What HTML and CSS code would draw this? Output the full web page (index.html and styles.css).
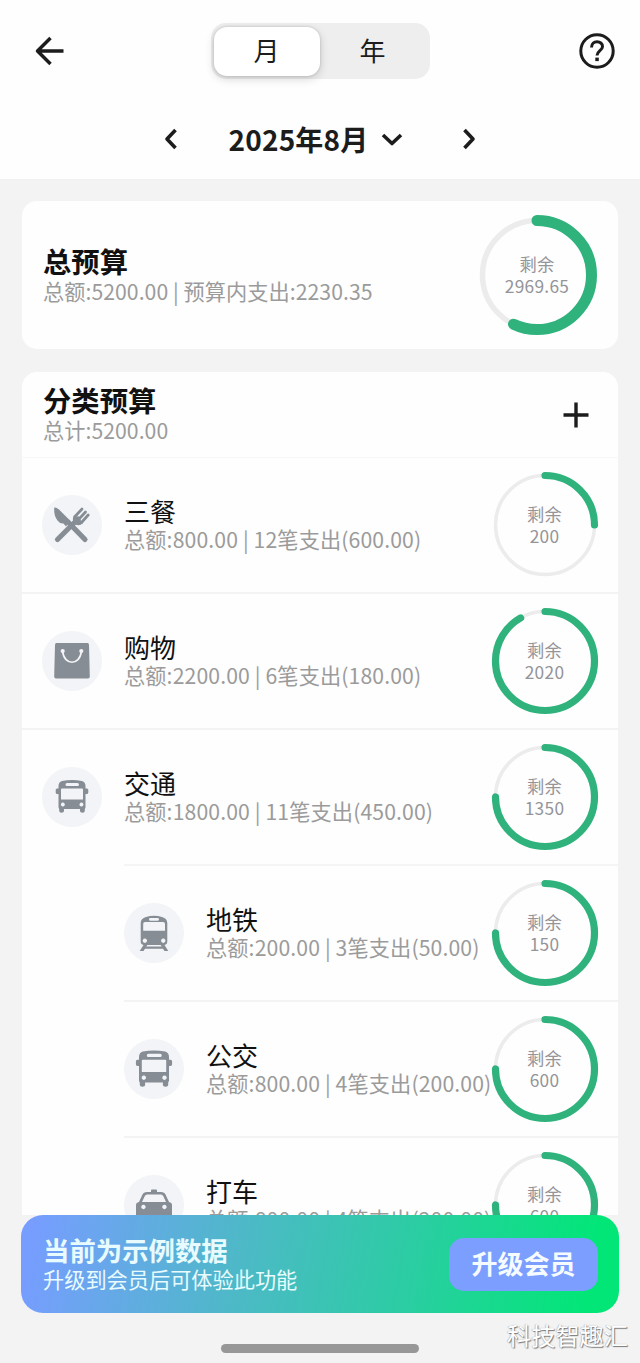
FILE: index.html
```html
<!DOCTYPE html>
<html lang="zh-CN">
<head>
<meta charset="utf-8">
<title>预算</title>
<link rel="stylesheet" href="styles.css">
</head>
<body>
<svg class="defs" width="0" height="0">
  <symbol id="bus" viewBox="0 0 60 60">
    <path fill="currentColor" fill-rule="evenodd" d="M20 14Q30 12 40 14Q43.500 15 43.500 19V21.500H45Q46.300 21.500 46.300 23V25.500Q46.300 27 44.800 27H43.500V40.500L42.800 42V44Q42.800 45.800 40.500 45.800Q38 45.800 38 44V42H22V44Q22 45.800 19.500 45.800Q17.200 45.800 17.200 44V42L16.500 40.500V27H15.200Q13.700 27 13.700 25.500V23Q13.700 21.500 15 21.500H16.500V19Q16.500 15 20 14ZM25 16Q23.500 16 23.500 17.500Q23.500 19 25 19H35.500Q37 19 37 17.500Q37 16 35.500 16ZM20 21.500Q19 21.500 19 22.500V32.500H41V22.500Q41 21.500 40 21.500ZM20.800 35.600A2 2 0 1 0 20.900 35.600ZM39.400 35.600A2 2 0 1 0 39.500 35.600Z"/>
  </symbol>
</svg>
<div class="screen">
  <header class="top">
    <div class="nav">
      <svg class="ico" width="30" height="30" viewBox="0 0 30 30"><path d="M28.500 15H2M15.500 2L2.500 15L15.500 28" fill="none" stroke="currentColor" stroke-width="3.500" stroke-linejoin="round"/></svg>
      <div class="toggle"><span class="tab active">月</span><span class="tab">年</span></div>
      <svg class="ico" width="36" height="36" viewBox="0 0 36 36"><circle cx="18" cy="18" r="16.200" fill="none" stroke="currentColor" stroke-width="3"/><path d="M12.500 14.500C12.500 6.500 23.700 7.300 23.500 13.700C23.400 17.500 18 17.800 18 22.400" fill="none" stroke="currentColor" stroke-width="3"/><rect x="16.300" y="24.600" width="3.500" height="3.500" fill="currentColor"/></svg>
    </div>
    <div class="month">
      <svg width="14" height="22" viewBox="0 0 14 22"><path d="M11.500 2L3 11L11.500 20" class="chev"/></svg>
      <div class="date">2025年8月<svg width="22" height="14" viewBox="0 0 22 14"><path d="M2 3L11 11.500L20 3" class="chev"/></svg></div>
      <svg width="14" height="22" viewBox="0 0 14 22"><path d="M2.500 2L11 11L2.500 20" class="chev"/></svg>
    </div>
  </header>
  <main class="scroll">
    <section class="card total">
      <div class="info"><h2>总预算</h2><p>总额:5200.00 | 预算内支出:2230.35</p></div>
      <div class="ring big">
        <svg width="122" height="122" viewBox="-61 -61 122 122"><circle class="track" r="54.500"/><circle class="bar" r="54.500" pathLength="100" stroke-dasharray="57.100 100"/></svg>
        <div class="left"><span>剩余</span><span>2969.65</span></div>
      </div>
    </section>
    <section class="card list">
      <div class="list-head">
        <div class="info"><h2>分类预算</h2><p>总计:5200.00</p></div>
        <svg class="ico" width="26" height="26" viewBox="0 0 26 26"><path d="M13 .5V25.500M.5 13H25.500" stroke="currentColor" stroke-width="3.400"/></svg>
      </div>
      <div class="row">
        <svg class="cat" viewBox="0 0 60 60"><g stroke="currentColor" stroke-linecap="round" fill="none"><path d="M26 27L43 44.500" stroke-width="5.200"/><path d="M15.500 44.500L36 24" stroke-width="5.200"/><path d="M33 21.500L40 14M37 24L43.500 17M39.500 27.500L46.200 20" stroke-width="2.700"/></g><path fill="currentColor" d="M12.300 12.500Q14 12 17 14.500L28 25.500L24 31.500L21.500 28.500Q18 29 15.500 25.500Q11.500 20 12.300 12.500ZM31.800 20.500Q29.500 26 33 29Q37 32 41 28L36 22Z"/></svg>
        <div class="info"><h3>三餐</h3><p>总额:800.00 | 12笔支出(600.00)</p></div>
        <div class="ring"><svg width="108" height="108" viewBox="-54 -54 108 108"><circle class="track" r="49.500"/><circle class="bar" r="49.500" pathLength="100" stroke-dasharray="25 100"/></svg><div class="left"><span>剩余</span><span>200</span></div></div>
      </div>
      <div class="row">
        <svg class="cat" viewBox="0 0 60 60"><path fill="currentColor" d="M14.500 12H45.500Q47 12 47 14L47.800 45.500Q47.800 47.500 46 47.500H14Q12.200 47.500 12.200 45.500L13 14Q13 12 14.500 12Z"/><g fill="none" stroke="#f2f4f7" stroke-width="1.700"><path d="M20.700 20C21.500 35 38.500 35 39.300 20"/></g><g fill="#f2f4f7"><circle cx="20.700" cy="20" r="2.100"/><circle cx="39.300" cy="20" r="2.100"/></g></svg>
        <div class="info"><h3>购物</h3><p>总额:2200.00 | 6笔支出(180.00)</p></div>
        <div class="ring"><svg width="108" height="108" viewBox="-54 -54 108 108"><circle class="track" r="49.500"/><circle class="bar" r="49.500" pathLength="100" stroke-dasharray="91.800 100"/></svg><div class="left"><span>剩余</span><span>2020</span></div></div>
      </div>
      <div class="row parent">
        <svg class="cat" viewBox="0 0 60 60"><use href="#bus" width="60" height="60"/></svg>
        <div class="info"><h3>交通</h3><p>总额:1800.00 | 11笔支出(450.00)</p></div>
        <div class="ring"><svg width="108" height="108" viewBox="-54 -54 108 108"><circle class="track" r="49.500"/><circle class="bar" r="49.500" pathLength="100" stroke-dasharray="75 100"/></svg><div class="left"><span>剩余</span><span>1350</span></div></div>
      </div>
      <div class="children">
        <div class="row">
          <svg class="cat" viewBox="0 0 60 60"><path fill="currentColor" fill-rule="evenodd" d="M22 14Q30 11.500 38 14Q43.300 15.500 43.300 20V38.500Q43.300 41.500 40.500 42L44.300 48H40.500L39 45.700H21L19.500 48H15.700L19.500 42Q16.700 41.500 16.700 38.500V20Q16.700 15.500 22 14ZM26.500 15Q25 15 25 16.300Q25 17.800 26.500 17.800H33.500Q35 17.800 35 16.300Q35 15 33.500 15ZM21 19Q19.200 19 19.200 21V27.800H41V21Q41 19 39 19ZM20.800 35.500A2.200 2.200 0 1 0 20.900 35.500ZM39.200 35.500A2.200 2.200 0 1 0 39.300 35.500ZM23.300 42L22.300 43.500H37.700L36.700 42Z"/></svg>
          <div class="info"><h3>地铁</h3><p>总额:200.00 | 3笔支出(50.00)</p></div>
          <div class="ring"><svg width="108" height="108" viewBox="-54 -54 108 108"><circle class="track" r="49.500"/><circle class="bar" r="49.500" pathLength="100" stroke-dasharray="75 100"/></svg><div class="left"><span>剩余</span><span>150</span></div></div>
        </div>
        <div class="row">
          <svg class="cat" viewBox="0 0 60 60"><use href="#bus" width="60" height="60" transform="translate(-3.300 -3) scale(1.110)"/></svg>
          <div class="info"><h3>公交</h3><p>总额:800.00 | 4笔支出(200.00)</p></div>
          <div class="ring"><svg width="108" height="108" viewBox="-54 -54 108 108"><circle class="track" r="49.500"/><circle class="bar" r="49.500" pathLength="100" stroke-dasharray="75 100"/></svg><div class="left"><span>剩余</span><span>600</span></div></div>
        </div>
        <div class="row">
          <svg class="cat" viewBox="0 0 60 60"><path fill="currentColor" fill-rule="evenodd" d="M27 17V15.500Q27 14.500 28 14.500H32Q33 14.500 33 15.500V17H37Q40.500 17 41.500 19.500L45 27Q48 27.500 48 30V46H12V30Q12 27.500 15 27L18.500 19.500Q19.500 17 23 17ZM23 19.500Q21.500 19.500 20.800 21L18 27H42L39.200 21Q38.500 19.500 37 19.500ZM19.400 29.800A2.200 2.200 0 1 0 19.500 29.800ZM40.400 29.800A2.200 2.200 0 1 0 40.500 29.800Z"/></svg>
          <div class="info"><h3>打车</h3><p>总额:800.00 | 4笔支出(200.00)</p></div>
          <div class="ring"><svg width="108" height="108" viewBox="-54 -54 108 108"><circle class="track" r="49.500"/><circle class="bar" r="49.500" pathLength="100" stroke-dasharray="75 100"/></svg><div class="left"><span>剩余</span><span>600</span></div></div>
        </div>
      </div>
    </section>
  </main>
  <footer class="bottom">
    <div class="banner">
      <div class="info"><h4>当前为示例数据</h4><p>升级到会员后可体验此功能</p></div>
      <div class="upgrade">升级会员</div>
    </div>
    <div class="home"></div>
    <div class="mark">科技智趣汇</div>
  </footer>
</div>
</body>
</html>
```
FILE: styles.css
```css
* { box-sizing: border-box; }
body { margin: 0; font-family: "Noto Sans CJK SC", sans-serif; color: #1c1c1c; background: #f3f3f3; }
h2, h3, h4, p { margin: 0; white-space: nowrap; }
svg { display: block; flex: none; }
.defs { position: absolute; }
.screen { width: 640px; height: 1363px; display: flex; flex-direction: column; overflow: hidden; }
.top { height: 180px; flex: none; background: #fefefe; border-bottom: 1px solid #f0f0f0; }
.nav { display: flex; justify-content: space-between; align-items: center; padding: 23px 25px 0 35px; height: 79px; }
.toggle { width: 219px; height: 56px; border-radius: 15px; background: #eee; display: flex; padding: 4px 3px 3px; margin-right: 4px; }
.tab { width: 106px; line-height: 46px; font-size: 26px; text-align: center; border-radius: 13px; }
.active { height: 49px; background: #fff; box-shadow: 0 3px 10px rgba(0,0,0,.16), 0 0 3px rgba(0,0,0,.18); }
.month { display: flex; justify-content: space-between; align-items: center; height: 60px; margin: 30px 164px 0; }
.date { display: flex; align-items: center; gap: 12px; font-size: 28px; line-height: 40px; font-weight: 700; letter-spacing: .2px; margin-right: 9px; }
.chev { fill: none; stroke: currentColor; stroke-width: 3.6; stroke-linejoin: round; }
.scroll { height: 1035px; flex: none; padding: 21px 22px 0; overflow: hidden; }
.card { background: #fefefe; border-radius: 15px; }
.info { color: #9b9b9b; font-size: 21.2px; line-height: 28px; }
.info h2 { font-size: 28.3px; line-height: 32px; color: #111; font-weight: 700; }
.info h3 { font-size: 26px; line-height: 28px; color: #111; font-weight: 400; }
.total { height: 148px; display: flex; align-items: center; justify-content: space-between; padding: 0 21px 0 21px; }
.total .info, .list-head .info { margin-top: -1px; letter-spacing: .05px; }
.list { margin-top: 23px; }
.list-head { height: 86px; display: flex; align-items: center; justify-content: space-between; padding: 0 29px 0 21px; border-bottom: 1px solid #f8f8f8; }
.row { height: 136px; display: flex; align-items: center; padding: 0 20px; border-bottom: 2px solid #f3f3f3; }
.row .info { margin: 0 0 0 22px; letter-spacing: .12px; }
.row .ring { margin-left: auto; margin-right: .5px; }
.parent { border-bottom-color: transparent; }
.children { margin-left: 102px; box-shadow: 0 -2px 0 #f5f5f5; }
.children .row { padding-left: 0; }
.children .cat + .info { margin-right: -10px; }
.cat { width: 60px; height: 60px; border-radius: 50%; background: #f2f4f7; color: #878d95; }
.ring { display: grid; place-items: center; flex: none; }
.ring > * { grid-area: 1 / 1; }
.ring svg { margin: 0 -1px; }
.track, .bar { fill: none; stroke: #ececec; stroke-width: 3.500px; }
.bar { stroke: #2fb27c; stroke-width: 7.2px; stroke-linecap: round; transform: rotate(-90deg); }
.big .track { stroke-width: 5.500px; }
.big .bar { stroke-width: 11px; }
.left { display: flex; flex-direction: column; align-items: center; font-size: 17.3px; line-height: 22px; color: #949499; letter-spacing: .3px; padding-bottom: 1px; }
.bottom { flex: 1; position: relative; padding: 0 21px; }
.banner { height: 98px; border-radius: 22px; background: linear-gradient(100deg, #779dff 2%, #4db9c7 37%, #2ccca4 64%, #02e678 94%); display: flex; align-items: center; justify-content: space-between; padding: 0 21px 0 22px; }
.banner .info { color: #e8fbff; font-size: 21.2px; line-height: 29px; }
.banner h4 { font-size: 26.4px; line-height: 28px; font-weight: 700; }
.upgrade { width: 149px; height: 53px; border-radius: 15px; background: #7b9eff; color: #f5fbff; font-size: 26px; line-height: 50px; font-weight: 700; text-align: center; }
.home { width: 198px; height: 9px; border-radius: 5px; background: #979797; margin: 31px auto 0; }
.mark { position: absolute; left: 507px; top: 102px; font-size: 24.2px; line-height: 36px; color: #fff; text-shadow: 1px 1px 1px #777, -0.5px -0.5px 1px #aaa; white-space: nowrap; }
```
